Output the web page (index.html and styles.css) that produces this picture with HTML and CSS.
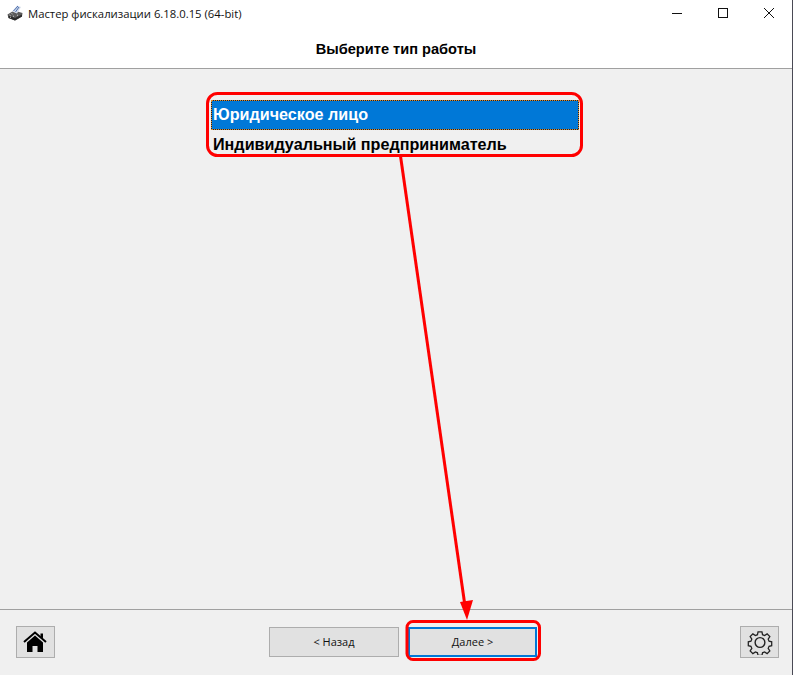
FILE: index.html
```html
<!DOCTYPE html>
<html lang="ru">
<head>
<meta charset="utf-8">
<title>Мастер фискализации</title>
<link rel="stylesheet" href="styles.css">
</head>
<body>
<div class="window">
  <div class="titlebar">
    <svg class="app-icon" viewBox="0 0 16 16" width="16" height="16">
      <path d="M0.500 9.500L7 5.500l8.500 2.500-.5 3.500L8 15.500 1.500 13z" fill="#5c5c5c"/>
      <path d="M1.500 10.500L8 13l7-3.500v2L8 15.500 1.500 13z" fill="#2c2c2c"/>
      <path d="M5 6.500L10 0.500l4 1.500-4 6.500z" fill="#d5dcea"/>
      <path d="M6.500 6L11 1M8.500 7l3.500-5" stroke="#4a6fb0" stroke-width="1" fill="none"/>
      <path d="M2.500 10l1 .5M4.500 8.500l1 .5M3 12l1 .5M6 11l1 .5M10 10l1 .5" stroke="#cfcfcf" stroke-width="1" fill="none"/>
    </svg>
    <span class="title-text">Мастер фискализации 6.18.0.15 (64-bit)</span>
    <div class="controls">
      <svg class="ctl" viewBox="0 0 46 30" width="46" height="30"><path d="M18 13.500h10" stroke="#111" fill="none"/></svg>
      <svg class="ctl" viewBox="0 0 46 30" width="46" height="30"><rect x="18.500" y="8.500" width="9" height="9" stroke="#111" fill="none"/></svg>
      <svg class="ctl" viewBox="0 0 46 30" width="46" height="30"><path d="M18 8l10 10M28 8L18 18" stroke="#111" fill="none"/></svg>
    </div>
  </div>
  <header class="heading">Выберите тип работы</header>
  <main class="content">
    <ul class="list">
      <li class="item selected">Юридическое лицо</li>
      <li class="item">Индивидуальный предприниматель</li>
    </ul>
  </main>
  <footer class="footer">
    <button class="btn icon-btn home-btn" aria-label="Домой">
      <svg viewBox="0 0 24 22" width="24" height="22">
        <path d="M1 11L12 1.500 23 11" fill="none" stroke="#000" stroke-width="2"/>
        <path d="M17.500 2.500h2.500v5l-2.500-2z" fill="#000"/>
        <path d="M4 11.500L12 4.500l8 7V21h-5.500v-6h-5v6H4z" fill="#000"/>
      </svg>
    </button>
    <div class="nav">
      <button class="btn nav-btn">&lt; Назад</button>
      <button class="btn nav-btn primary">Далее &gt;</button>
    </div>
    <button class="btn icon-btn" aria-label="Настройки">
      <svg viewBox="0 0 24 24" width="26" height="26">
        <path d="M10 1.500h4l.6 3 2.100.9 2.600-1.700 2.800 2.800-1.700 2.600.9 2.100 2.700.6v4l-2.700.6-.9 2.100 1.700 2.600-2.800 2.800-2.600-1.700-2.100.9-.6 2.700h-4l-.6-2.700-2.100-.9-2.600 1.700-2.800-2.800 1.700-2.600-.9-2.100-2.700-.6v-4l2.700-.6.9-2.100-1.700-2.600 2.800-2.800 2.600 1.700 2.100-.9z" transform="translate(1.200 1.200) scale(.9)" fill="none" stroke="#222" stroke-width="1.300"/>
        <circle cx="12" cy="12.500" r="4.500" fill="none" stroke="#222" stroke-width="1.300"/>
      </svg>
    </button>
  </footer>
  <svg class="annotation" viewBox="0 0 793 675" width="793" height="675">
    <rect x="207.500" y="93.500" width="374" height="62" rx="10" fill="none" stroke="#f00" stroke-width="3"/>
    <rect x="407" y="621.500" width="132.500" height="38" rx="6" fill="none" stroke="#f00" stroke-width="3"/>
    <path d="M400.500 156L465 606" stroke="#f00" stroke-width="3" fill="none"/>
    <path d="M460 602l13-2-6 20z" fill="#f00"/>
  </svg>
</div>
</body>
</html>
```

FILE: styles.css
```css
* { box-sizing: border-box; }
html, body { margin: 0; padding: 0; }
body { width: 793px; height: 675px; overflow: hidden; font-family: "Liberation Sans", Arial, sans-serif; background: #f0f0f0; }
.window { position: relative; width: 793px; height: 675px; display: flex; flex-direction: column; border-right: 1px solid #4a4a55; }
.titlebar { height: 30px; background: #fff; display: flex; align-items: flex-start; padding-left: 7px; }
.app-icon { margin-top: 5px; }
.title-text { font-family: "Open Sans", "Noto Sans", sans-serif; font-size: 11.300px; line-height: 16px; margin: 6px 0 0 5px; color: #111; }
.controls { margin-left: auto; display: flex; }
.ctl { display: block; }
.heading { height: 39px; background: #fff; border-bottom: 1px solid #a0a0a0; font-size: 14.600px; font-weight: 700; text-align: center; line-height: 38px; color: #000; }
.content { flex: 1; padding: 31px 0 0 211px; }
.list { list-style: none; margin: 0; padding: 0; width: 368px; }
.item { height: 30px; font-size: 16.170px; font-weight: 700; line-height: 29px; padding-left: 2px; color: #000; }
.selected { background: #0078d7; color: #fff; outline: 1px dotted #e08a20; outline-offset: -1px; box-shadow: inset 0 0 0 1px #14233a; }
.footer { height: 66px; border-top: 1px solid #a0a0a0; display: flex; align-items: flex-start; justify-content: space-between; padding: 16px 13px 0 16px; }
.btn { background: #e1e1e1; border: 1px solid #adadad; padding: 0; font-family: "Open Sans", "Noto Sans", sans-serif; color: #111; }
.icon-btn { width: 39px; height: 32px; display: flex; align-items: center; justify-content: center; }
.home-btn { padding-right: 2px; }
.nav { display: flex; gap: 9px; margin: 1px 0 0 11px; }
.nav-btn { width: 130px; height: 30px; font-size: 11px; padding-bottom: 2px; }
.primary { width: 129px; border: 2px solid #0078d7; }
.annotation { position: absolute; left: 0; top: 0; pointer-events: none; }
```
